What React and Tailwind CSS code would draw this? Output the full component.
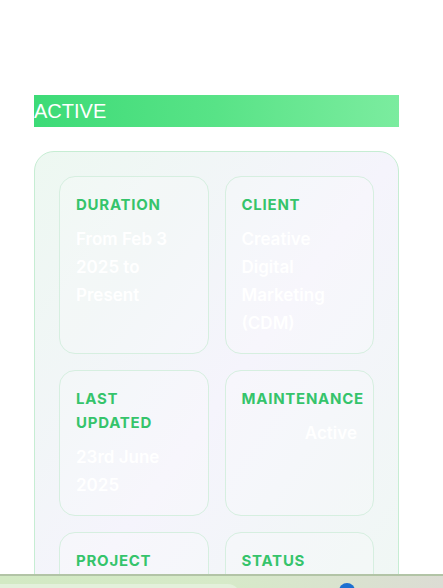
import React from "react";

function Item({ label, value, right }) {
  return (
    <div className="rounded-2xl border border-[#d6efe0] bg-white/20 p-4">
      <div className="text-[15px] font-bold uppercase leading-6 tracking-[0.05em] text-[#35c46b] whitespace-nowrap">
        {label}
      </div>
      {value ? (
        <div
          className={
            "mt-2 text-[17px] font-semibold leading-7 text-white " +
            (right ? "text-right" : "")
          }
        >
          {value}
        </div>
      ) : (
        <div className="h-10" />
      )}
    </div>
  );
}

export default function App() {
  return (
    <div
      className="min-h-screen bg-white pt-[95px] pl-[34px] pb-10"
      style={{ fontFamily: "Inter, 'Liberation Sans', Arial, sans-serif" }}
    >
      <div className="w-[365px]">
        <div
          className="h-8 bg-gradient-to-r from-[#3cdb77] via-[#58e387] to-[#7bec9f] text-[20px] leading-8 text-white"
          style={{ fontFamily: "'Liberation Sans', Arial, sans-serif" }}
        >
          ACTIVE
        </div>
        <div className="mt-6 rounded-[20px] border border-[#c6edd3] bg-gradient-to-br from-[#edf8f1] via-[#f5f4fc] to-[#eff8f3] p-6">
          <div className="grid grid-cols-2 gap-4">
            <Item label="Duration" value="From Feb 3 2025 to Present" />
            <Item label="Client" value="Creative Digital Marketing (CDM)" />
            <Item label={<>Last<br />Updated</>} value="23rd June 2025" />
            <Item label="Maintenance" value="Active" right />
            <Item label="Project" />
            <Item label="Status" />
          </div>
        </div>
      </div>
      <div className="fixed bottom-0 left-0 right-0 h-[14px] border-t-2 border-[#b2c4a6] bg-gradient-to-r from-[#d2e9c3] via-[#d6eac8] to-[#dcdcd4] overflow-hidden">
        <div className="absolute left-0 top-[8px] h-4 w-[240px] rounded-tr-xl bg-[#e3f0db]" />
        <div className="absolute left-[339px] top-[7px] h-4 w-4 rounded-full bg-[#1c6fd1]" />
      </div>
    </div>
  );
}
